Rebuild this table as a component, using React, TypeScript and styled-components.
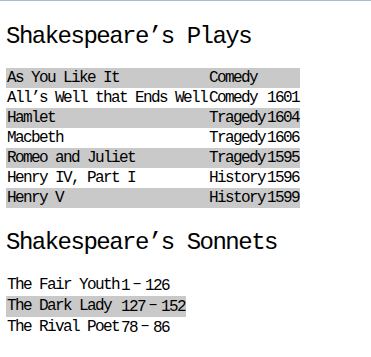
import styled, { createGlobalStyle } from "styled-components";

const GlobalStyle = createGlobalStyle`
    html {
        border-top: 1px solid #a9bad2;
        background: #fff;
    }

    body {
        margin: 0;
        padding: 0 6px;
        color: #000;
        font-family: "Liberation Mono", "DejaVu Sans Mono", monospace;
    }
`;

const Heading = styled.h2<{ $gapTop: number; $gapBottom: number }>`
    margin: ${(p) => p.$gapTop}px 0 ${(p) => p.$gapBottom}px;
    font-size: 24px;
    font-weight: normal;
    line-height: 28px;
    letter-spacing: -1.5px;
    white-space: nowrap;
`;

const Table = styled.table`
    border-collapse: collapse;
    border-spacing: 0;
    font-size: 16px;
    letter-spacing: -1.6px;
`;

const Row = styled.tr<{ $shaded: boolean }>`
    background: ${(p) => (p.$shaded ? "#c9c9c9" : "transparent")};
`;

const Cell = styled.td`
    padding: 1px 1px 0;
    line-height: 19px;
    white-space: nowrap;
    vertical-align: top;
`;

// the dash in "1–126" takes a full-width slot
const Dash = styled.span`
    display: inline-block;
    width: 16px;
    text-align: center;
    letter-spacing: 0;
    vertical-align: 2px;
    line-height: 1;
`;

const plays = [
    ["As You Like It", "Comedy", ""],
    ["All’s Well that Ends Well", "Comedy", "1601"],
    ["Hamlet", "Tragedy", "1604"],
    ["Macbeth", "Tragedy", "1606"],
    ["Romeo and Juliet", "Tragedy", "1595"],
    ["Henry IV, Part I", "History", "1596"],
    ["Henry V", "History", "1599"],
];

const sonnets = [
    ["The Fair Youth", "1", "126"],
    ["The Dark Lady", "127", "152"],
    ["The Rival Poet", "78", "86"],
];

export default function App() {
    return (
        <>
            <GlobalStyle />
            <Heading $gapTop={22} $gapBottom={17}>Shakespeare’s Plays</Heading>
            <Table>
                <tbody>
                    {plays.map(([title, genre, year], i) => (
                        <Row key={title} $shaded={i % 2 === 0}>
                            <Cell>{title}</Cell>
                            <Cell>{genre}</Cell>
                            <Cell>{year}</Cell>
                        </Row>
                    ))}
                </tbody>
            </Table>
            <Heading $gapTop={21} $gapBottom={18}>Shakespeare’s Sonnets</Heading>
            <Table>
                <tbody>
                    {sonnets.map(([name, from, to], i) => (
                        <Row key={name} $shaded={i % 2 === 1}>
                            <Cell>{name}</Cell>
                            <Cell>
                                {from}
                                <Dash>–</Dash>
                                {to}
                            </Cell>
                        </Row>
                    ))}
                </tbody>
            </Table>
        </>
    );
}
